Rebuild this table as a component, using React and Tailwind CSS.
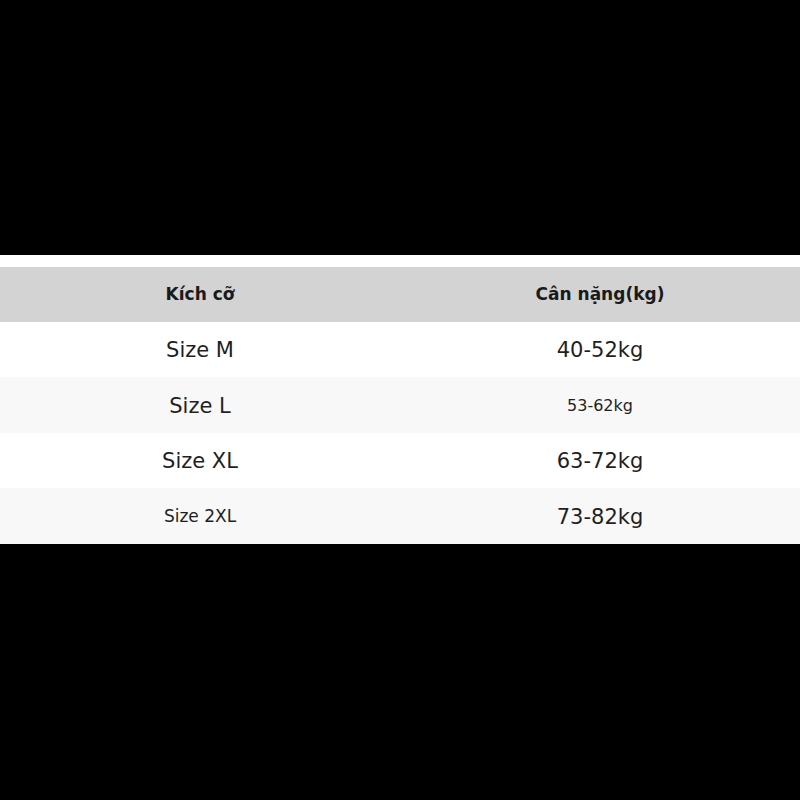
import React from 'react';

const rows = [
  { size: 'Size M', weight: '40-52kg', sizeCls: 'text-[21px] pt-[3px]', weightCls: 'text-[21px] pt-[3px]', bg: 'bg-white', h: 'h-[55px]' },
  { size: 'Size L', weight: '53-62kg', sizeCls: 'text-[21px] pt-[3px]', weightCls: 'text-[16px] pt-[2px]', bg: 'bg-[#f8f8f8]', h: 'h-[56px]' },
  { size: 'Size XL', weight: '63-72kg', sizeCls: 'text-[21px] pt-[3px]', weightCls: 'text-[21px] pt-[3px]', bg: 'bg-white', h: 'h-[55px]' },
  { size: 'Size 2XL', weight: '73-82kg', sizeCls: 'text-[17px] pt-[2px]', weightCls: 'text-[21px] pt-[3px]', bg: 'bg-[#f8f8f8]', h: 'h-[56px]' },
];

const App = () => {
  return (
    <div
      className="w-[800px] h-[800px] bg-black overflow-hidden"
      style={{ fontFamily: '"DejaVu Sans", Verdana, sans-serif' }}
    >
      <div className="mt-[255px] bg-white pt-[12px]">
        {/* header */}
        <div className="grid grid-cols-2 h-[55px] bg-[#d3d3d3] text-[#1a1a1a]">
          <div className="flex items-center justify-center font-bold text-[17px] pt-[1px]">Kích cỡ</div>
          <div className="flex items-center justify-center font-bold text-[17px] pt-[1px]">Cân nặng(kg)</div>
        </div>
        {rows.map((r) => (
          <div key={r.size} className={`grid grid-cols-2 ${r.h} ${r.bg} text-[#1f1f1f]`}>
            <div className={`flex items-center justify-center ${r.sizeCls}`}>{r.size}</div>
            <div className={`flex items-center justify-center ${r.weightCls}`}>{r.weight}</div>
          </div>
        ))}
      </div>
    </div>
  );
};

export default App;
